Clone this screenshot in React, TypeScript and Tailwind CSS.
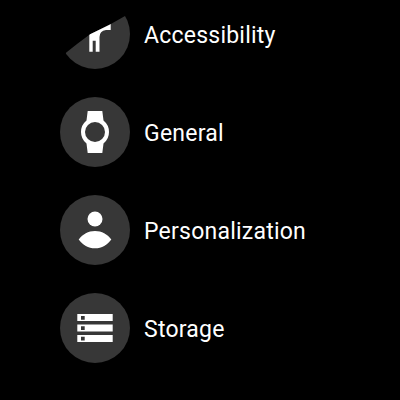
const rows = [
  { label: 'Accessibility', icon: <AccessibilityIcon />, clipped: true },
  { label: 'General', icon: <WatchIcon /> },
  { label: 'Personalization', icon: <PersonIcon /> },
  { label: 'Storage', icon: <StorageIcon /> },
];

function AccessibilityIcon() {
  return (
    <svg width="70" height="70" viewBox="0 0 70 70" fill="#fff">
      <path d="M29.3 20 L50.7 20 L50.7 31 L46 31 Q39.5 32 39.5 38 L39.5 52.7 L35.7 52.7 L35.7 41.7 L32.7 41.7 L32.7 52.7 L29.3 52.7 Z" />
    </svg>
  );
}

function WatchIcon() {
  return (
    <svg width="70" height="70" viewBox="0 0 70 70">
      <path d="M27.7 14 H42.3 L43.5 23.5 Q49 28 49 35 Q49 42 43.5 46.5 L42.3 56 H27.7 L26.5 46.5 Q21 42 21 35 Q21 28 26.5 23.5 Z" fill="#fff" />
      <circle cx="35" cy="35" r="10" fill="#373737" />
    </svg>
  );
}

function PersonIcon() {
  return (
    <svg width="70" height="70" viewBox="0 0 70 70" fill="#fff">
      <circle cx="35" cy="24" r="7.5" />
      <path d="M18.7 44.5 C23 39 28 36 35 36 C42 36 47 39 51.3 44.5 C47 50 42 53.3 35 53.3 C28 53.3 23 50 18.7 44.5 Z" />
    </svg>
  );
}

function StorageIcon() {
  return (
    <svg width="70" height="70" viewBox="0 0 70 70">
      <path fillRule="evenodd" fill="#fff" d="M17.3 21 H52.7 V28 H17.3 Z M21 23 V26.7 H24.7 V23 Z M17.3 31.5 H52.7 V38.5 H17.3 Z M21 33.3 V37 H24.7 V33.3 Z M17.3 42 H52.7 V49 H17.3 Z M21 43.8 V47.5 H24.7 V43.8 Z" />
    </svg>
  );
}

export default function App() {
  return (
    <div className="w-[400px] h-[400px] overflow-hidden bg-black font-['Roboto',sans-serif]">
      <div className="-mt-[15px] flex flex-col pl-[60px]">
        {rows.map((row) => (
          <div key={row.label} className="flex h-[98px] items-center gap-[14px]">
            <div
              className={
                row.clipped
                  ? 'flex h-[70px] w-[70px] items-center justify-center rounded-full bg-[#373737] [clip-path:polygon(8.6%_76.7%,24.3%_64.3%,42.9%_50.4%,71.4%_36.4%,92.9%_24.3%,130%_10%,130%_130%,-10%_130%)]'
                  : 'flex h-[70px] w-[70px] items-center justify-center rounded-full bg-[#373737]'
              }
            >
              {row.icon}
            </div>
            <span className="pt-1 text-[23px] tracking-[0.23px] text-white">{row.label}</span>
          </div>
        ))}
      </div>
    </div>
  );
}
